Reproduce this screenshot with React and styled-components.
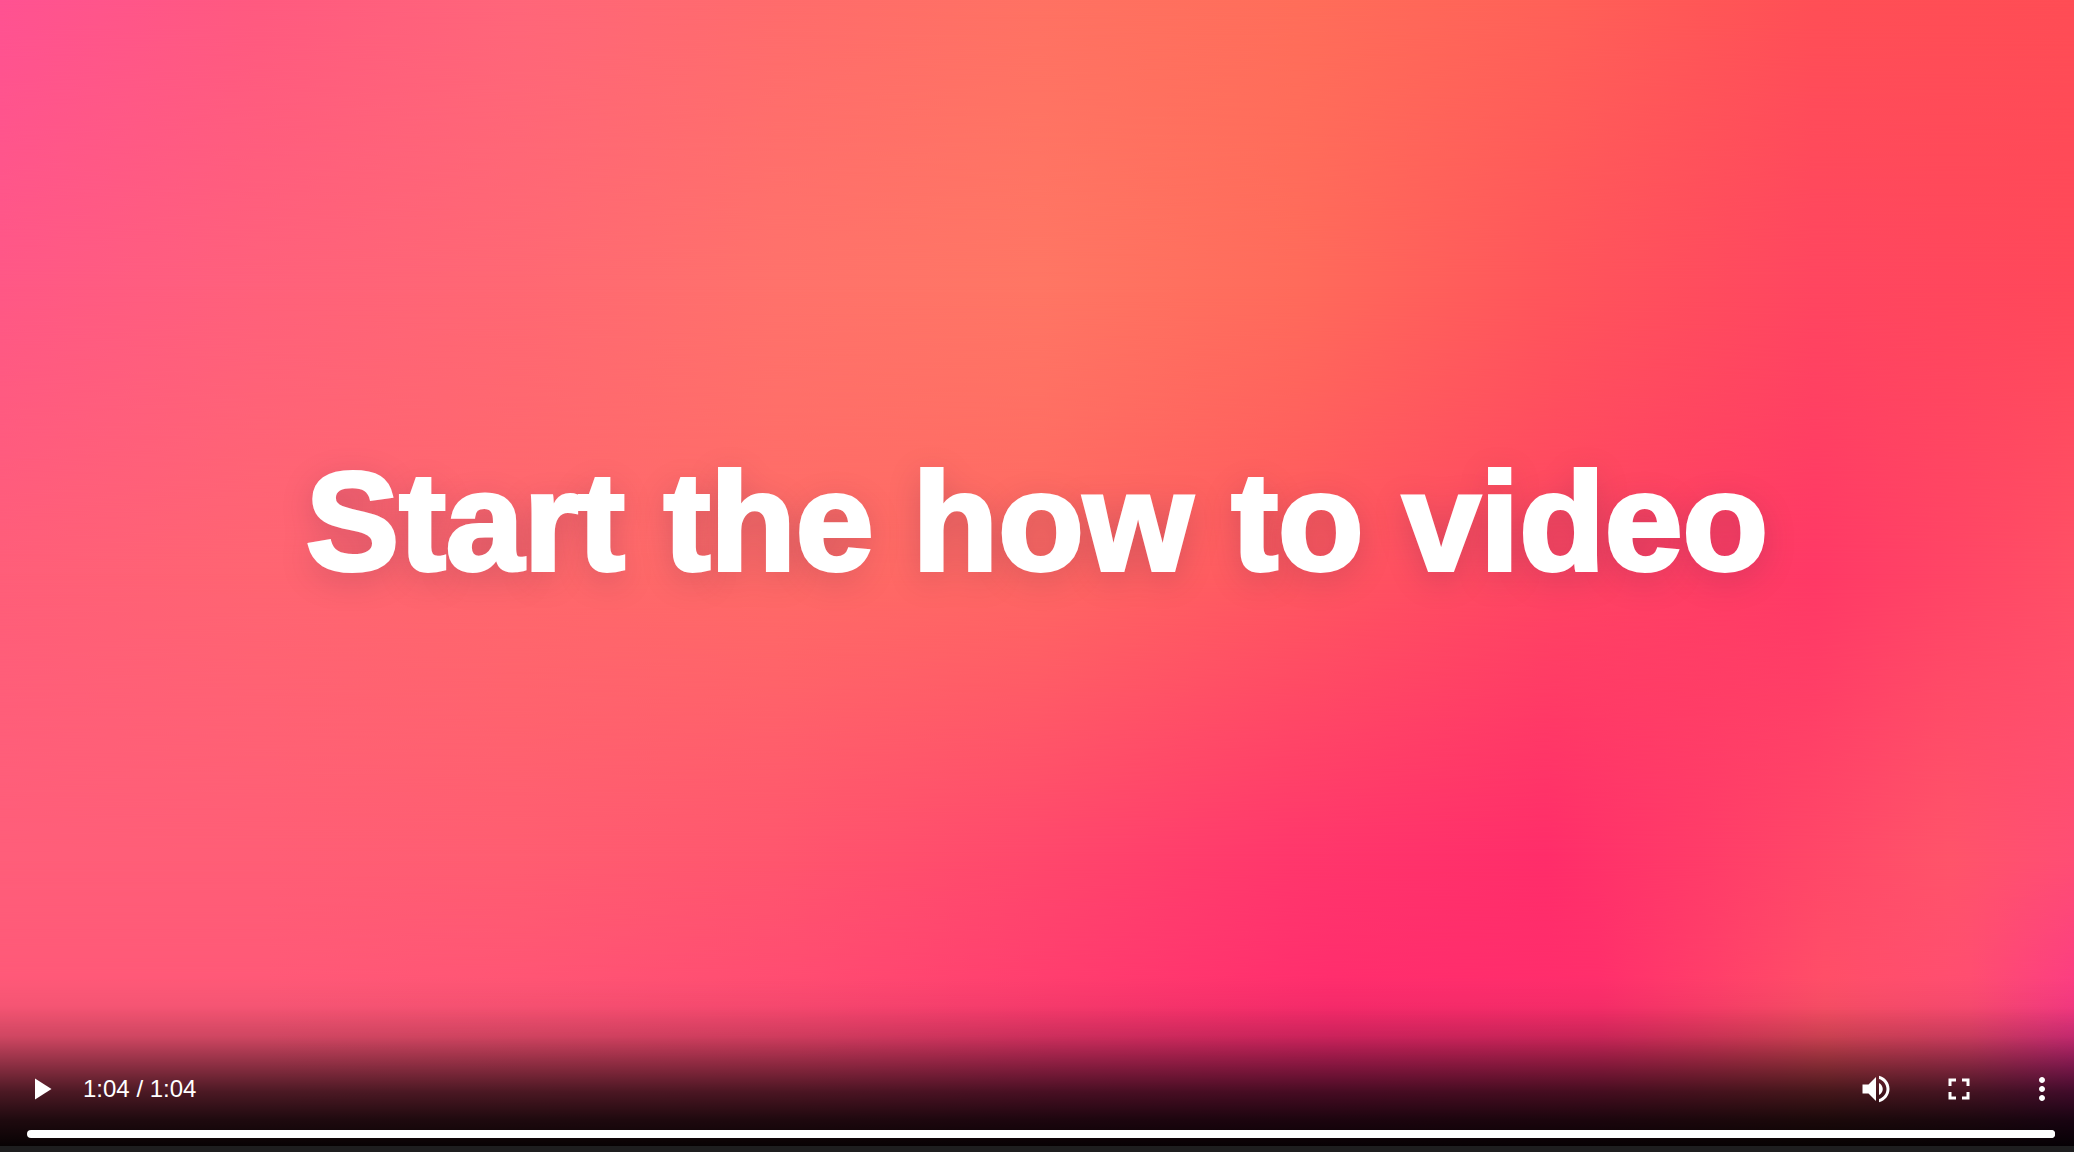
import React, { useState } from "react";
import styled, { createGlobalStyle } from "styled-components";

const GlobalStyle = createGlobalStyle`
  * { box-sizing: border-box; }
  body {
    margin: 0;
    background: #1e1e1f;
    font-family: "Liberation Sans", Arial, sans-serif;
  }
`;

/* Colour mesh of the opening frame: each band is blended into the one above it. */
const bands = [
  { from: 0, to: 0, colors: "#ff5292, #ff5a80, #ff667a, #ff6c6c, #ff7263, #ff6e5a, #ff6158, #ff4f56, #ff4d55" },
  { from: 0, to: 25, colors: "#ff5886, #ff617b, #ff6873, #ff726b, #ff7664, #ff6b5b, #ff555b, #ff4660, #ff485a" },
  { from: 25, to: 50, colors: "#ff5e79, #ff6572, #ff686c, #ff6b67, #ff6863, #ff5860, #ff4563, #ff3966, #ff5066" },
  { from: 50, to: 75, colors: "#ff5e7a, #ff5e76, #ff5d71, #ff566e, #ff486c, #ff376c, #ff2d6a, #ff4668 87%, #ff546a 94%, #ff4e74" },
  { from: 75, to: 88, colors: "#ff5878, #ff5878, #ff5375, #ff4a72, #ff3b6f, #ff2c6e, #ff2e6c 77%, #ff5068 88%, #ff4c72 95%, #fb3a84" },
  { from: 88, to: 100, colors: "#fa5078, #fa5078, #f84c74, #f84474, #e82c78, #e02278, #d82a68 77%, #d84c50 88%, #d03870 95%, #c01890" },
];

const Player = styled.main`
  display: grid;
  min-height: 100vh;
  padding-bottom: 6px;
`;

const Band = styled.div`
  grid-area: 1 / 1;
  background: linear-gradient(to right, ${(p) => p.$colors});
  mask-image: ${(p) =>
    p.$to ? `linear-gradient(to bottom, transparent ${p.$from}%, #000 ${p.$to}%)` : "none"};
`;

const Shade = styled.div`
  grid-area: 1 / 1;
  align-self: end;
  z-index: 1;
  height: 170px;
  background: linear-gradient(
    to bottom,
    rgba(0, 0, 0, 0) 0,
    rgba(0, 0, 0, 0.04) 30px,
    rgba(0, 0, 0, 0.18) 60px,
    rgba(0, 0, 0, 0.44) 88px,
    rgba(0, 0, 0, 0.7) 116px,
    rgba(0, 0, 0, 0.88) 144px,
    rgba(0, 0, 0, 0.97) 170px
  );
`;

const Content = styled.div`
  grid-area: 1 / 1;
  display: flex;
  flex-direction: column;
  z-index: 2;
`;

const Stage = styled.section`
  flex: 1;
  display: flex;
  align-items: center;
  justify-content: center;
`;

const Title = styled.h1`
  margin: 0;
  color: #fff;
  font-size: 140px;
  font-weight: 700;
  line-height: 140px;
  text-align: center;
  -webkit-text-stroke: 4px #fff;
  text-shadow: 0 8px 32px rgba(70, 30, 70, 0.26);
`;

const Controls = styled.div`
  display: flex;
  flex-direction: column;
  gap: 17px;
  padding: 22px 0 8px;
`;

const ButtonRow = styled.div`
  display: flex;
  align-items: center;
  justify-content: space-between;
  padding: 0 8px 0 17px;
`;

const Group = styled.div`
  display: flex;
  align-items: center;
  gap: ${(p) => p.$gap}px;
`;

const IconButton = styled.button`
  display: flex;
  align-items: center;
  justify-content: center;
  width: 48px;
  height: 48px;
  padding: 0;
  border: 0;
  background: none;
  color: #fff;
  cursor: pointer;

  svg {
    width: 36px;
    height: 36px;
    fill: currentColor;
  }
`;

const Time = styled.span`
  color: #fff;
  font-size: 24px;
  line-height: 28px;
`;

const Timeline = styled.input`
  appearance: none;
  height: 8px;
  margin: 0 19px 0 27px;
  border-radius: 4px;
  background: #fff;
  cursor: pointer;

  &::-webkit-slider-thumb {
    appearance: none;
    width: 8px;
    height: 8px;
    border-radius: 4px;
    background: #fff;
  }
`;

const icons = {
  play: "M8 5v14l11-7z",
  volume:
    "M3 9v6h4l5 5V4L7 9H3zm13.5 3c0-1.77-1.02-3.29-2.5-4.03v8.05c1.48-.73 2.5-2.25 2.5-4.02zM14 3.23v2.06c2.89.86 5 3.54 5 6.71s-2.11 5.85-5 6.71v2.06c4.01-.91 7-4.49 7-8.77s-2.99-7.86-7-8.77z",
  fullscreen:
    "M7 14H5v5h5v-2H7v-3zm-2-4h2V7h3V5H5v5zm12 7h-3v2h5v-5h-2v3zM14 5v2h3v3h2V5h-5z",
  more:
    "M12 8c1.1 0 2-.9 2-2s-.9-2-2-2-2 .9-2 2 .9 2 2 2zm0 2c-1.1 0-2 .9-2 2s.9 2 2 2 2-.9 2-2-.9-2-2-2zm0 6c-1.1 0-2 .9-2 2s.9 2 2 2 2-.9 2-2-.9-2-2-2z",
};

function ControlButton({ icon, label }) {
  return (
    <IconButton type="button" aria-label={label}>
      <svg viewBox="0 0 24 24" aria-hidden="true">
        <path d={icons[icon]} />
      </svg>
    </IconButton>
  );
}

export default function App() {
  const [position, setPosition] = useState(64);
  return (
    <>
      <GlobalStyle />
      <Player>
        {bands.map((band) => (
          <Band key={band.to} $from={band.from} $to={band.to} $colors={band.colors} />
        ))}
        <Shade />
        <Content>
          <Stage>
            <Title>Start the how to video</Title>
          </Stage>
          <Controls>
            <ButtonRow>
              <Group $gap={18}>
                <ControlButton icon="play" label="Play" />
                <Time>1:04 / 1:04</Time>
              </Group>
              <Group $gap={35}>
                <ControlButton icon="volume" label="Mute" />
                <ControlButton icon="fullscreen" label="Full screen" />
                <ControlButton icon="more" label="More options" />
              </Group>
            </ButtonRow>
            <Timeline
              type="range"
              min="0"
              max="64"
              value={position}
              onChange={(e) => setPosition(Number(e.target.value))}
              aria-label="Video position"
            />
          </Controls>
        </Content>
      </Player>
    </>
  );
}
